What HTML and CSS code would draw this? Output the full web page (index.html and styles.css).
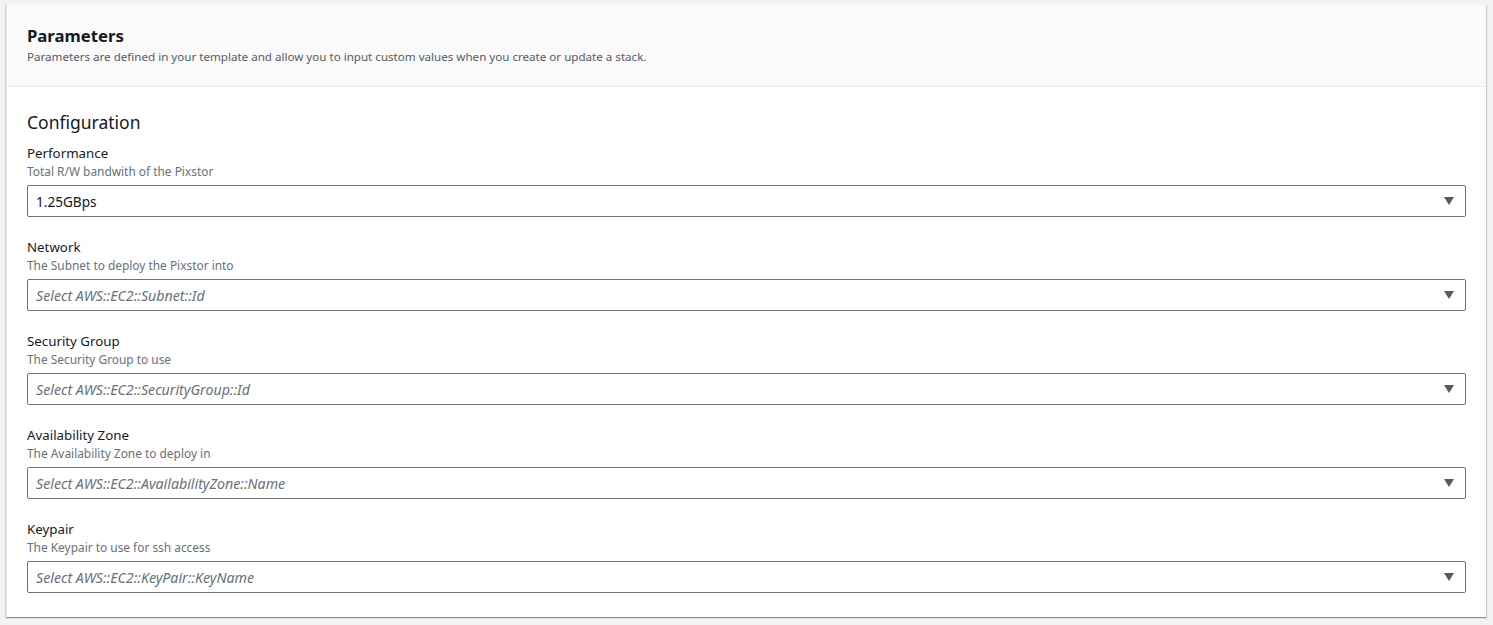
FILE: index.html
```html
<!DOCTYPE html>
<html lang="en">
<head>
<meta charset="utf-8">
<title>Parameters</title>
<link rel="stylesheet" href="styles.css">
</head>
<body>
<div class="page">
  <section class="card">
    <header class="card-header">
      <h2 class="card-title">Parameters</h2>
      <p class="card-desc">Parameters are defined in your template and allow you to input custom values when you create or update a stack.</p>
    </header>
    <div class="card-body">
      <h3 class="group-title">Configuration</h3>
      <div class="field">
        <div class="label">Performance</div>
        <div class="hint">Total R/W bandwith of the Pixstor</div>
        <div class="select"><span class="value">1.25GBps</span><span class="caret"></span></div>
      </div>
      <div class="field">
        <div class="label">Network</div>
        <div class="hint">The Subnet to deploy the Pixstor into</div>
        <div class="select"><span class="placeholder">Select AWS::EC2::Subnet::Id</span><span class="caret"></span></div>
      </div>
      <div class="field">
        <div class="label">Security Group</div>
        <div class="hint">The Security Group to use</div>
        <div class="select"><span class="placeholder">Select AWS::EC2::SecurityGroup::Id</span><span class="caret"></span></div>
      </div>
      <div class="field">
        <div class="label">Availability Zone</div>
        <div class="hint">The Availability Zone to deploy in</div>
        <div class="select"><span class="placeholder">Select AWS::EC2::AvailabilityZone::Name</span><span class="caret"></span></div>
      </div>
      <div class="field">
        <div class="label">Keypair</div>
        <div class="hint">The Keypair to use for ssh access</div>
        <div class="select"><span class="placeholder">Select AWS::EC2::KeyPair::KeyName</span><span class="caret"></span></div>
      </div>
    </div>
  </section>
</div>
</body>
</html>
```

FILE: styles.css
```css
html, body {
  margin: 0;
  padding: 0;
  background: #f2f3f3;
  font-family: "Noto Sans", "Open Sans", sans-serif;
  color: #16191f;
}
.page {
  padding: 4px 7px 8px 6px;
}
.card {
  background: #ffffff;
  border-left: 1px solid #e4e6e6;
  box-shadow: 0 1px 1px 0 rgba(0, 28, 36, 0.3), 1px 1px 1px 0 rgba(0, 28, 36, 0.15), -1px 1px 1px 0 rgba(0, 28, 36, 0.08);
}
.card-header {
  background: #fafafa;
  border-bottom: 1px solid #eaeded;
  padding: 21px 20px 0 20px;
  height: 61px;
}
.card-title {
  margin: 0;
  font-size: 16.7px;
  line-height: 22px;
  font-weight: 700;
}
.card-desc {
  margin: 2px 0 0 0;
  font-size: 11.6px;
  line-height: 16px;
  color: #545b64;
}
.card-body {
  padding: 23px 20px 24px 20px;
}
.group-title {
  margin: 0 0 9px 0;
  font-size: 17.5px;
  line-height: 24px;
  font-weight: 400;
}
.field {
  margin-bottom: 20px;
}
.field:last-child {
  margin-bottom: 0;
}
.label {
  font-size: 13.3px;
  line-height: 20px;
}
.hint {
  font-size: 11.9px;
  line-height: 16px;
  color: #687078;
  margin-bottom: 6px;
}
.select {
  display: flex;
  align-items: center;
  justify-content: space-between;
  height: 30px;
  border: 1px solid #687078;
  border-radius: 2px;
  padding: 0 11px 0 8px;
}
.value {
  color: #16191f;
  font-size: 13.6px;
}
.placeholder {
  color: #687078;
  font-style: italic;
  font-size: 14.2px;
}
.caret {
  width: 0;
  height: 0;
  border-left: 5px solid transparent;
  border-right: 5px solid transparent;
  border-top: 8px solid #545b64;
}
```
